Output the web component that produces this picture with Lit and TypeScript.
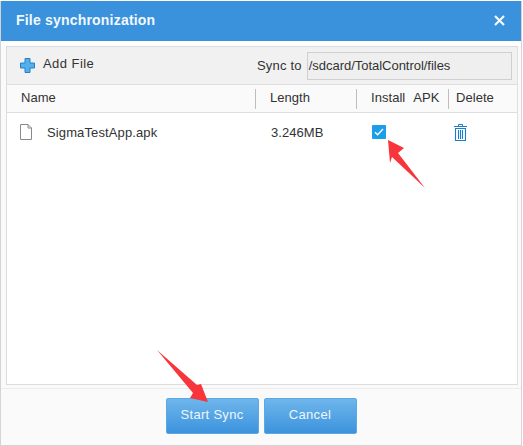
import { LitElement, html, css } from "lit";
import { customElement } from "lit/decorators.js";

@customElement("app-root")
export class AppRoot extends LitElement {
  static styles = css`
    :host { display: block; width: 523px; height: 446px; background: #fff; position: relative; overflow: hidden;
      font-family: "Liberation Sans", Arial, sans-serif; font-size: 13px; color: #333; }
    .win { box-sizing: border-box; width: 522px; height: 445px; margin: 1px 0 0 0; border: 1px solid #d4d4d4; border-top: 0;
      display: flex; flex-direction: column; background: #fafafa; }
    .title { height: 40px; flex: none; background: #3a92dc; color: #f2f8fd; font-weight: 700; font-size: 14px; letter-spacing: .2px;
      display: flex; align-items: center; justify-content: space-between; padding: 0 16px 3px 15px; box-sizing: border-box; }
    .title svg { display: block; margin-top: 1px; }
    .gap { height: 5px; flex: none; background: #fff; }
    .panel { box-sizing: border-box; height: 339px; flex: none; margin: 0 3px 0 5px; border: 1px solid #dcdcdc; border-right-color: #e0e0e0; background: #fff; display: flex; flex-direction: column; }
    .toolbar { box-sizing: border-box; height: 38px; flex: none; background: #f1f1f1; border-bottom: 1px solid #dedede; display: flex; align-items: center; }
    .add { display: flex; align-items: center; margin-left: 13px; gap: 8px; width: 237px; color: #333; }
    .add span { letter-spacing: .45px; margin-top: -4px; }
    .sync { letter-spacing: .2px; }
    .path { box-sizing: border-box; width: 205px; height: 28px; margin-left: 5px; margin-top: 1px; border: 1px solid #cfcfcf; background: #efefef; padding: 0 0 0 1px;
      line-height: 26px; letter-spacing: -.03px; white-space: nowrap; }
    .head { box-sizing: border-box; height: 28px; flex: none; background: #fafafa; border-bottom: 1px solid #dedede; display: grid;
      grid-template-columns: 248px 101px 92px 1fr; align-items: center; }
    .head div { box-sizing: border-box; height: 20px; line-height: 18px; white-space: nowrap; letter-spacing: .05px; }
    .head div + div { border-left: 1px solid #bdbdbd; }
    .head .c1, .head .c2, .head .c3 { padding-left: 14px; }
    .head .c3 { word-spacing: 5px; }
    .head .c4 { padding-left: 7px; }
    .body { flex: 1; display: grid; grid-template-columns: 248px 101px 92px 1fr; align-content: start; }
    .cell { height: 38px; display: flex; align-items: center; letter-spacing: .12px; }
    .cell.name { padding-left: 13px; gap: 15px; }
    .cell.len { padding-left: 16px; letter-spacing: .05px; }
    .cell.chk { padding-left: 16px; }
    .cell.del { padding-left: 6px; }
    .check { width: 14px; height: 14px; border-radius: 1px; background: #1b9de8; display: flex; align-items: center; justify-content: center; }
    .footer { flex: 1; border-top: 1px solid #ececec; margin-top: 3px; background: #fafafa; display: flex; justify-content: center; padding: 9px 0 0 0; box-sizing: border-box; }
    .btn { box-sizing: border-box; width: 93px; height: 36px; border: 1px solid #5ca8e2; border-radius: 2px; background: linear-gradient(#6fb6ec, #3c93dd);
      color: #eef6fd; font: 13px "Liberation Sans", Arial, sans-serif; letter-spacing: .3px; padding: 0 0 3px; }
    .btns { display: flex; gap: 5px; }
    .arrows { position: absolute; left: 0; top: 0; pointer-events: none; }
  `;

  render() {
    return html`
      <div class="win">
        <div class="title">
          <span>File synchronization</span>
          <svg width="11" height="11" viewBox="0 0 11 11"><path d="M1 1l9 9M10 1l-9 9" stroke="#f4f9fd" stroke-width="2.2" fill="none"/></svg>
        </div>
        <div class="gap"></div>
        <div class="panel">
          <div class="toolbar">
            <div class="add">
              <svg width="15" height="15" viewBox="0 0 15 15"><path d="M5 .5h5v4.500h4.500v5H10v4.500H5V10H.5V5H5z" fill="#53b0ec" stroke="#2a7fc4"/></svg>
              <span>Add File</span>
            </div>
            <span class="sync">Sync to</span>
            <div class="path">/sdcard/TotalControl/files</div>
          </div>
          <div class="head">
            <div class="c1">Name</div><div class="c2">Length</div><div class="c3">Install APK</div><div class="c4">Delete</div>
          </div>
          <div class="body">
            <div class="cell name">
              <svg width="12" height="16" viewBox="0 0 12 16"><path d="M.5.5h7.500l3.500 3.500v11.500h-11zM8 .5v3.500h3.500" fill="#fff" stroke="#8a8a8a"/></svg>
              <span>SigmaTestApp.apk</span>
            </div>
            <div class="cell len">3.246MB</div>
            <div class="cell chk"><div class="check"><svg width="10" height="8" viewBox="0 0 10 8"><path d="M1 4.200l2.600 2.600L9 1" stroke="#fff" stroke-width="1.400" fill="none"/></svg></div></div>
            <div class="cell del">
              <svg width="13" height="17" viewBox="0 0 13 17"><path d="M4.500 2V.5h4V2M0 2.500h13" stroke="#1a7fc8" stroke-width="1" fill="none"/><path d="M1.500 4.500h10v12h-10zM4.500 6v9M6.500 6v9M8.500 6v9" stroke="#1a7fc8" stroke-width="1.100" fill="none"/></svg>
            </div>
          </div>
        </div>
        <div class="footer">
          <div class="btns">
            <button class="btn">Start Sync</button>
            <button class="btn">Cancel</button>
          </div>
        </div>
      </div>
      <svg class="arrows" width="523" height="446" viewBox="0 0 523 446">
        <path d="M388 140L404 148L398 153L425 188L392 157L390 163Z" fill="#f8353a"/>
        <path d="M157 350L197 385L201 384L208 402L190 398L193 393Z" fill="#f8353a"/>
      </svg>
    `;
  }
}
